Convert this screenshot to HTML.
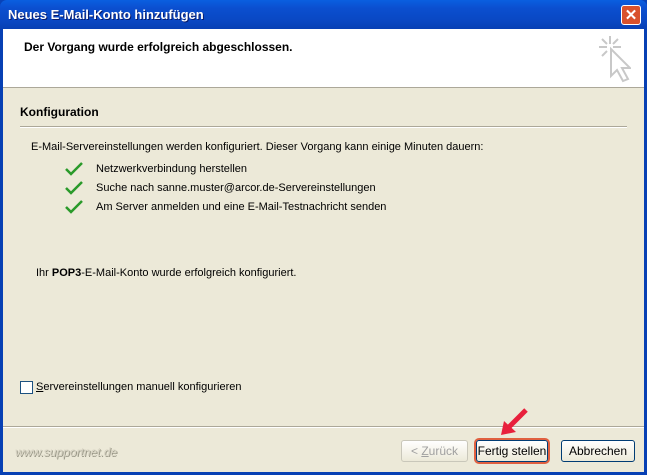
<!DOCTYPE html><html><head><style>
body{margin:0;width:647px;height:475px;overflow:hidden;font-family:"Liberation Sans",sans-serif;font-size:11px;color:#000;background:#0842b8}
.win{position:absolute;left:0;top:0;width:647px;height:475px;background:linear-gradient(#0a5fe0,#0b4fd0 8px,#0a48c4 20px,#0740b4 29px);border-radius:7px 7px 0 0}
.title{position:absolute;left:8px;top:7px;color:#fff;font-weight:bold;font-size:13px;text-shadow:1px 1px #0a1c6a}
.x{position:absolute;left:621px;top:5px;width:20px;height:20px;border:1px solid #fff;border-radius:3px;background:#d9512c;color:#fff;font-weight:bold;text-align:center;line-height:20px;font-size:15px;box-sizing:border-box}
.client{position:absolute;left:3px;top:29px;width:641px;height:443px;background:#ece9d8}
.head{position:absolute;left:0;top:0;width:641px;height:58px;background:#fff;border-bottom:1px solid #aca899}
.t{position:absolute;white-space:nowrap}
.b{font-weight:bold}
.btn{position:absolute;top:411px;height:22px;border:1px solid #003c74;border-radius:3px;background:linear-gradient(#fff,#ece9d8);text-align:center;line-height:21px;box-sizing:border-box;white-space:nowrap;font-size:12px}
</style></head><body><div class="win">
<div class="title">Neues E-Mail-Konto hinzufügen</div>
<div class="x">✕</div>
<div class="client">
<div class="head">
<div class="t b" style="left:21px;top:11px;font-size:12px">Der Vorgang wurde erfolgreich abgeschlossen.</div>
<svg style="position:absolute;left:592px;top:5px" width="36" height="50" viewBox="0 0 36 50" fill="none" stroke="#c8c8c8" stroke-width="2"><path d="M15 2v8M4 13h8M18 13h8M7 5l5 5M23 5l-5 5M7 22l5-5"/><path d="M16 15l0 27 6-6 6 11 5-2-6-11 8 0z" fill="#fff"/></svg>
</div>
<div class="t b" style="left:17px;top:76px;font-size:12px">Konfiguration</div>
<div style="position:absolute;left:17px;top:97px;width:607px;height:1px;background:#aca899;border-bottom:1px solid #fff"></div>
<div class="t" style="left:28px;top:112px">E-Mail-Servereinstellungen werden konfiguriert. Dieser Vorgang kann einige Minuten dauern:</div>
<svg style="position:absolute;left:61px;top:132px" width="20" height="60" viewBox="0 0 20 60" fill="none" stroke="#2a9a2a" stroke-width="2.5"><path d="M2 8l5 5 11-11M2 27l5 5 11-11M2 46l5 5 11-11"/></svg>
<div class="t" style="left:93px;top:134px">Netzwerkverbindung herstellen</div>
<div class="t" style="left:93px;top:153px">Suche nach sanne.muster@arcor.de-Servereinstellungen</div>
<div class="t" style="left:93px;top:172px">Am Server anmelden und eine E-Mail-Testnachricht senden</div>
<div class="t" style="left:33px;top:238px">Ihr <b>POP3</b>-E-Mail-Konto wurde erfolgreich konfiguriert.</div>
<div style="position:absolute;left:17px;top:352px;width:13px;height:13px;border:1px solid #1c5180;background:#fff;box-sizing:border-box"></div>
<div class="t" style="left:33px;top:352px"><u>S</u>ervereinstellungen manuell konfigurieren</div>
<div style="position:absolute;left:0;top:397px;width:641px;height:1px;background:#aca899;border-bottom:1px solid #fff"></div>
<div class="t" style="left:12px;top:416px;color:#d8d4c4;font-style:italic;font-size:12px;text-shadow:1px 1px #9a9888">www.supportnet.de</div>
<div class="btn" style="left:398px;width:67px;border-color:#c9c7ba;color:#a0a0a0">&lt; <u>Z</u>urück</div>
<div class="btn" style="left:473px;width:72px;box-shadow:0 0 0 2px #e06040">Fertig stellen</div>
<div class="btn" style="left:558px;width:74px">Abbrechen</div>
<svg style="position:absolute;left:495px;top:378px" width="32" height="32" viewBox="0 0 32 32"><path d="M28 3L10 21" stroke="#e8203c" stroke-width="5"/><path d="M3 28l3-14 12 11z" fill="#e8203c"/></svg>
</div></div></body></html>
